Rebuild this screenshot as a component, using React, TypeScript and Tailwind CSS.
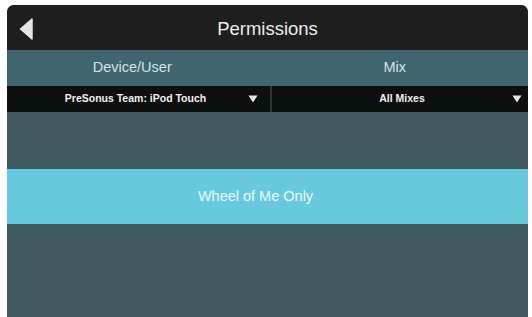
import React from 'react';

const Caret = () => (
  <svg width="10" height="8" viewBox="0 0 10 8" className="shrink-0">
    <path d="M0.5 0.5 L9.5 0.5 L5 7.5 Z" fill="#e8e8e8" />
  </svg>
);

export default function App() {
  return (
    <div className="w-[532px] h-[317px] bg-white pl-[7px] pr-[4px] pt-[5px] overflow-hidden" style={{ fontFamily: '"Liberation Sans", Arial, sans-serif' }}>
      <div className="h-full flex flex-col rounded-t-[7px] overflow-hidden bg-[#3e5a60]">
        {/* Header */}
        <div className="h-[45px] shrink-0 bg-[#1e1e1f] flex items-center relative pt-[3px]">
          <svg width="14" height="22" viewBox="0 0 14 22" className="absolute left-[12px] top-[13px]">
            <path d="M13 1 L13 21 L1.5 11 Z" fill="#e4e4e4" stroke="#e4e4e4" strokeLinejoin="round" strokeWidth="1.5" />
          </svg>
          <div className="w-full text-center text-[18.5px] text-[#ececec]">Permissions</div>
        </div>

        {/* Column titles */}
        <div className="h-[36px] shrink-0 bg-[#40656e] grid grid-cols-2 items-center text-[14.5px] text-[#d3e3e7]">
          <div className="text-center pr-[10px]">Device/User</div>
          <div className="text-center pr-[6px]">Mix</div>
        </div>

        {/* Dropdowns */}
        <div className="h-[26px] shrink-0 bg-[#0e0f0f] flex text-[10.5px] text-[#f0f0f0] font-semibold">
          <div className="w-[263px] flex items-center pl-[16px] pr-[12px]">
            <span className="flex-1 text-center">PreSonus Team: iPod Touch</span>
            <Caret />
          </div>
          <div className="w-[2px] bg-[#2e3334]" />
          <div className="flex-1 flex items-center pl-[20px] pr-[6px]">
            <span className="flex-1 text-center">All Mixes</span>
            <Caret />
          </div>
        </div>

        {/* Body */}
        <div className="h-[57px] shrink-0" />
        <div className="h-[55px] shrink-0 bg-[#66c9de] flex items-center justify-center text-[14.5px] text-[#eef9fc] pr-[24px]">
          Wheel of Me Only
        </div>
        <div className="flex-1" />
      </div>
    </div>
  );
}
